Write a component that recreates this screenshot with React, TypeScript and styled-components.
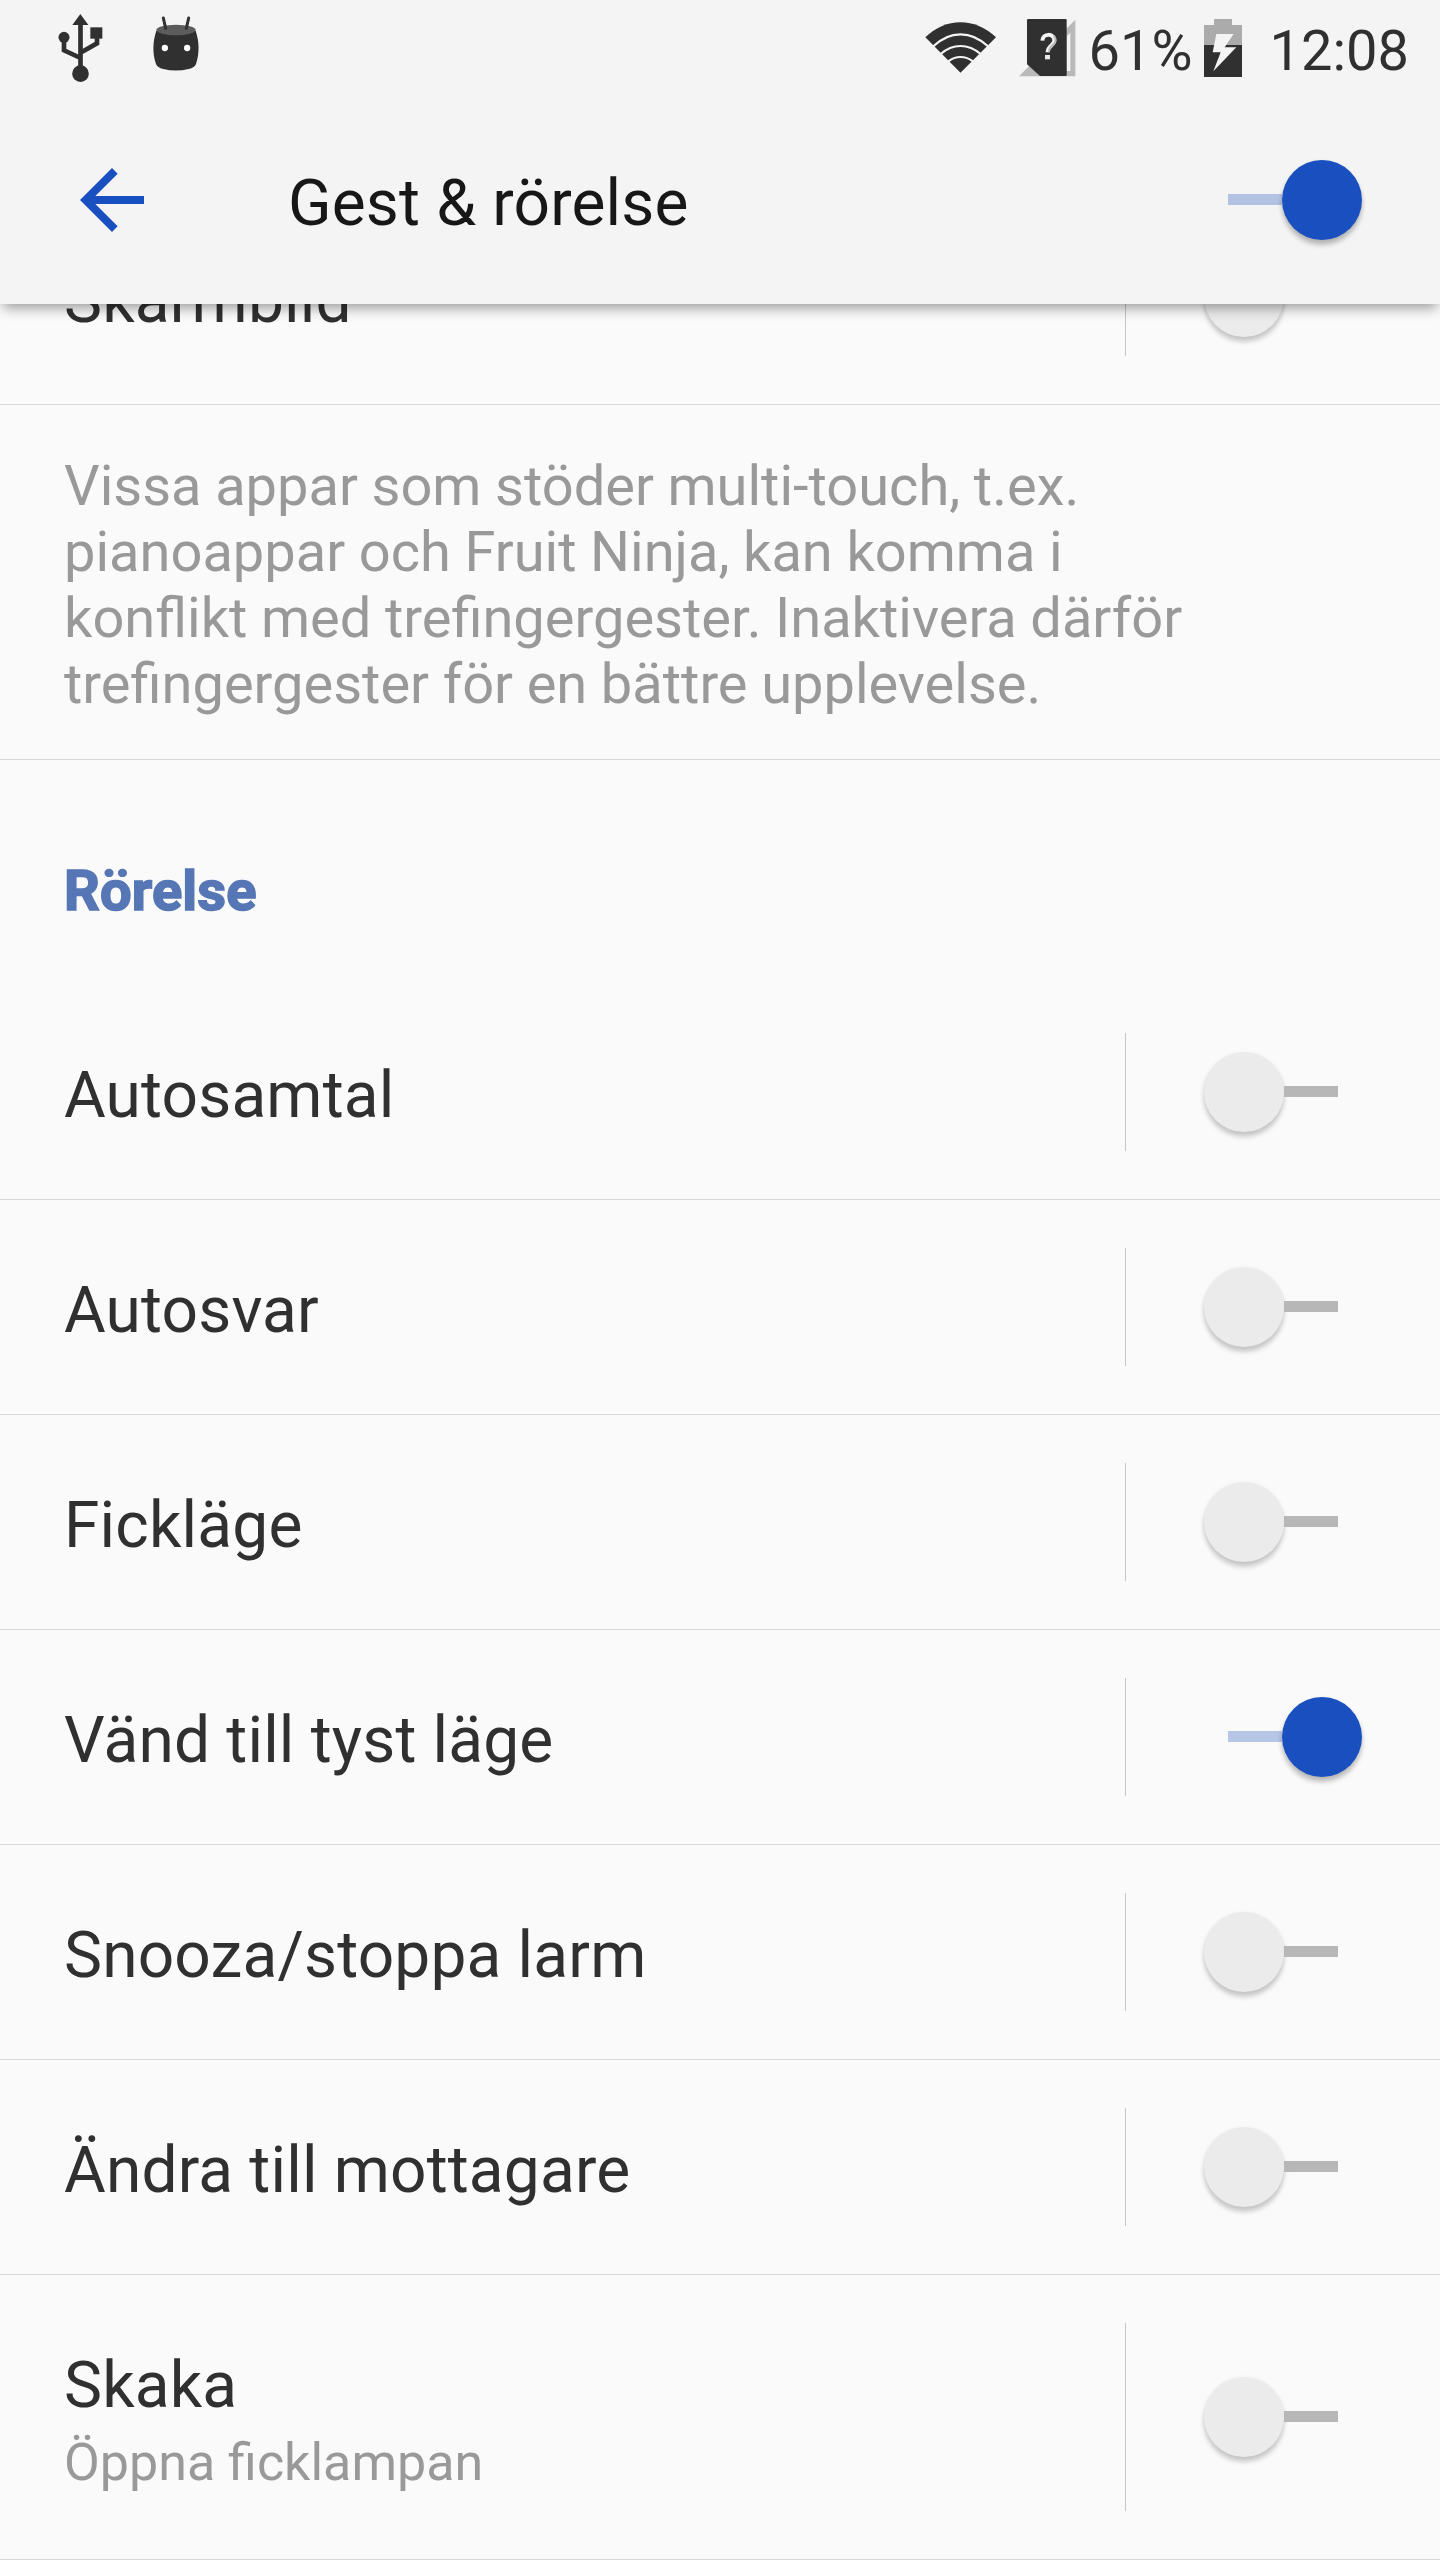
import React from "react";
import styled, { createGlobalStyle } from "styled-components";

const GlobalStyle = createGlobalStyle`
  * { box-sizing: border-box; }
  body { margin: 0; background: #fafafa; font-family: Roboto, "Noto Sans", sans-serif; }
`;

const Screen = styled.div`
  width: 1440px;
  height: 2560px;
  display: flex;
  flex-direction: column;
  overflow: hidden;
  background: #fafafa;
`;

const Header = styled.header`
  flex: none;
  position: relative;
  z-index: 1;
  height: 304px;
  background: #f4f4f4;
  box-shadow: 0 7px 12px -3px rgba(0, 0, 0, 0.38);
`;

const StatusBar = styled.div`
  height: 96px;
  display: flex;
  justify-content: space-between;
  padding: 0 31px 0 58px;
  color: #303030;

  svg { display: block; flex: none; }
`;

const Notifications = styled.div`
  display: flex;
  gap: 49px;
`;

const Indicators = styled.div`
  display: flex;
`;

const BatteryLevel = styled.div`
  display: flex;
  gap: 11.5px;
`;

const StatusText = styled.span<{ $width: number }>`
  width: ${(p) => p.$width}px;
  font-size: 56px;
  line-height: 102px;
  text-align: right;
  white-space: nowrap;
`;

const StatusIcon = styled.svg<{ $after: number }>`
  margin-right: ${(p) => p.$after}px;
`;

const Toolbar = styled.div`
  height: 208px;
  display: flex;
  align-items: center;
  padding: 0 78px 0 64px;
`;

const BackButton = styled.button`
  width: 96px;
  height: 96px;
  padding: 0;
  border: 0;
  background: none;
  color: #194fbe;

  svg { display: block; }
`;

const Title = styled.h1`
  flex: 1;
  margin: 0 0 0 128px;
  padding-top: 6px;
  font-size: 64px;
  font-weight: 400;
  line-height: 75px;
  letter-spacing: 0.17px;
  color: #171717;
`;

const List = styled.main`
  display: flex;
  flex-direction: column;
  margin-top: -114px;
`;

const Row = styled.div<{ $height: number }>`
  height: ${(p) => p.$height}px;
  display: flex;
  padding: 48px 0;
  border-bottom: 1px solid #d9d9d9;
`;

const Labels = styled.div`
  width: 1125px;
  display: flex;
  flex-direction: column;
  justify-content: center;
  padding: 6px 0 0 64px;
`;

const Label = styled.div`
  font-size: 64px;
  line-height: 75px;
  letter-spacing: 0.17px;
  color: #303030;
  white-space: nowrap;
`;

const Summary = styled.div`
  margin-top: 9px;
  margin-bottom: -1px;
  font-size: 52px;
  line-height: 61px;
  color: #999;
`;

const SwitchArea = styled.div`
  flex: 1;
  display: flex;
  align-items: center;
  border-left: 1px solid #c6c6c6;
  padding-left: 78px;
`;

const Switch = styled.span<{ $on: boolean }>`
  flex: none;
  width: 158px;
  height: 80px;
  display: flex;
  align-items: center;
  flex-direction: ${(p) => (p.$on ? "row-reverse" : "row")};
`;

const Thumb = styled.span<{ $on: boolean }>`
  flex: none;
  width: 80px;
  height: 80px;
  border-radius: 50%;
  background: ${(p) => (p.$on ? "#194fbe" : "#ebebeb")};
  box-shadow: 0 5px 5px ${(p) => (p.$on ? "rgba(0,0,0,.24)" : "rgba(0,0,0,.19)")},
    0 1px 5px rgba(0, 0, 0, 0.06);
`;

const Track = styled.span<{ $on: boolean }>`
  width: 54px;
  height: 11px;
  margin-bottom: 1px;
  background: ${(p) => (p.$on ? "rgba(25,79,190,.3)" : "#b7b7b7")};
`;

const Note = styled.p`
  height: 355px;
  margin: 0;
  padding: 48px 200px 0 64px;
  border-bottom: 1px solid #d9d9d9;
  font-size: 56px;
  line-height: 66px;
  word-spacing: -0.3px;
  color: #999;
`;

const SectionTitle = styled.h2`
  height: 225px;
  margin: 0;
  padding: 98px 64px 0;
  font-size: 56px;
  font-weight: 700;
  line-height: 66px;
  letter-spacing: 0.15px;
  color: #5676b5;
  -webkit-text-stroke: 1.6px #5676b5;
`;

const UsbIcon = () => (
  <svg width="45" height="96" viewBox="54 0 135 288" fill="currentColor">
    <path d="M121 42l24 33h-48z" />
    <circle cx="72" cy="112" r="16.5" />
    <rect x="151" y="82" width="36" height="34" />
    <circle cx="121.500" cy="221" r="25" />
    <path d="M121.500 70V210M72 118V151L121.500 174M171 110V130L121.500 158" fill="none" stroke="currentColor" strokeWidth="14" />
  </svg>
);

const DroidIcon = () => (
  <svg width="48" height="96" viewBox="336 0 144 288" fill="currentColor">
    <path d="M349 92C338 125 337 160 348 192Q352 203 370 207Q408 216 446 207Q464 203 468 192C479 160 478 125 467 92z" />
    <ellipse cx="408" cy="90" rx="59" ry="15.500" fill="#5c5c5c" />
    <path d="M370 54l7 31M446 54l-7 31" stroke="currentColor" strokeWidth="9" strokeLinecap="round" />
    <circle cx="374.500" cy="144" r="9.500" fill="#fff" />
    <circle cx="441.500" cy="144" r="9.500" fill="#fff" />
  </svg>
);

const WifiIcon = () => (
  <StatusIcon $after={22} width="73" height="96" viewBox="42 0 219 288" fill="currentColor">
    <path d="M46 112Q94 67 151.500 67T258 112L151.500 218z" />
    <path d="M70 139Q107 103 151.500 103T234 139M92 162Q119 138 151.500 138T212 162M114 185Q131 171 151.500 171T190 185" fill="none" stroke="#f4f4f4" strokeWidth="6.500" />
  </StatusIcon>
);

const SimIcon = () => (
  <StatusIcon $after={12.5} width="57" height="96" viewBox="327 0 171 288" fill="currentColor">
    <path d="M496 59V229H327z" fill="#b9b9b9" />
    <path d="M481 98V213H470V109z" fill="#f4f4f4" />
    <path d="M355 57H467Q470 57 470 60V225Q470 228 467 228H390L351 193V61Q351 57 355 57z" />
    <path d="M397 122C398 99 433 99 433 121C433 137 413 137 413 157" fill="none" stroke="#f4f4f4" strokeWidth="12" />
    <path d="M431 107C446 125 428 134 421 142Q417 147 417 157" fill="none" stroke="#b9b9b9" strokeWidth="6" />
    <rect x="405" y="165" width="15" height="13" fill="#e8e8e8" />
  </StatusIcon>
);

const BatteryIcon = () => (
  <StatusIcon $after={22} width="38" height="96" viewBox="102 0 114 288">
    <path d="M132 57H186V75H216V136H102V75H132z" fill="#ababab" />
    <rect x="102" y="135" width="114" height="96" fill="#303030" />
    <path d="M139 102H191L164 142H199L130 214L152 157H128z" fill="#f4f4f4" />
  </StatusIcon>
);

function Toggle({ on }: { on: boolean }) {
  return (
    <Switch $on={on} role="switch" aria-checked={on}>
      <Thumb $on={on} />
      <Track $on={on} />
    </Switch>
  );
}

function Setting({ label, summary, on = false }: { label: string; summary?: string; on?: boolean }) {
  return (
    <Row $height={summary ? 285 : 215}>
      <Labels>
        <Label>{label}</Label>
        {summary && <Summary>{summary}</Summary>}
      </Labels>
      <SwitchArea>
        <Toggle on={on} />
      </SwitchArea>
    </Row>
  );
}

const motions = [
  { label: "Autosamtal" },
  { label: "Autosvar" },
  { label: "Fickläge" },
  { label: "Vänd till tyst läge", on: true },
  { label: "Snooza/stoppa larm" },
  { label: "Ändra till mottagare" },
  { label: "Skaka", summary: "Öppna ficklampan" },
];

export default function App() {
  return (
    <Screen>
      <GlobalStyle />
      <Header>
        <StatusBar>
          <Notifications>
            <UsbIcon />
            <DroidIcon />
          </Notifications>
          <Indicators>
            <WifiIcon />
            <SimIcon />
            <BatteryLevel>
              <StatusText $width={104}>61%</StatusText>
              <BatteryIcon />
            </BatteryLevel>
            <StatusText $width={145}>12:08</StatusText>
          </Indicators>
        </StatusBar>
        <Toolbar>
          <BackButton>
            <svg width="96" height="96" viewBox="0 0 24 24" fill="currentColor">
              <path d="M20 11H7.830l5.590-5.590L12 4l-8 8 8 8 1.410-1.410L7.830 13H20v-2z" />
            </svg>
          </BackButton>
          <Title>Gest &amp; rörelse</Title>
          <Toggle on />
        </Toolbar>
      </Header>
      <List>
        <Setting label="Skärmbild" />
        <Note>
          Vissa appar som stöder multi-touch, t.ex.
          <br />
          pianoappar och Fruit Ninja, kan komma i
          <br />
          konflikt med trefingergester. Inaktivera därför
          <br />
          trefingergester för en bättre upplevelse.
        </Note>
        <SectionTitle>Rörelse</SectionTitle>
        {motions.map((m) => (
          <Setting key={m.label} {...m} />
        ))}
      </List>
    </Screen>
  );
}
